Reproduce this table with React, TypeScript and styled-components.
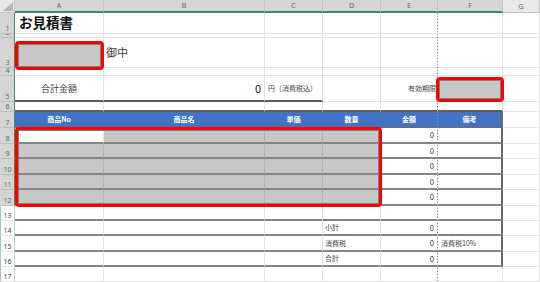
import React from 'react';
import styled, { createGlobalStyle } from 'styled-components';

const GlobalStyle = createGlobalStyle`
  html, body { margin: 0; padding: 0; background: #ffffff; }
  body {
    width: 540px; height: 282px; overflow: hidden;
    font-family: "Noto Sans CJK JP", "Noto Sans", "DejaVu Sans", sans-serif;
  }
  #root { width: 540px; height: 282px; }
`;

const ROW_HEIGHTS = [21, 4, 30, 8, 26, 10, 16, 16, 15, 16, 15, 16, 15, 15, 16, 15, 15];
const COL_LETTERS = ['A', 'B', 'C', 'D', 'E', 'F', 'G'];

const GRID = '1px solid #e3e3e3';
const TABLE_LINE = '2px solid #858585';
const GRAY = '#c7c7c7';
const BLUE = '#4472c4';

type Align = 'left' | 'right' | 'center';
const justify: Record<Align, string> = { left: 'flex-start', right: 'flex-end', center: 'center' };

const Sheet = styled.div`
  display: grid;
  grid-template-columns: 15px 89px 161px 58px 58px 57px 65px 37px;
  grid-template-rows: 13px ${ROW_HEIGHTS.map((h) => `${h}px`).join(' ')};
  width: 540px;
  height: 282px;
  overflow: hidden;
  background: #ffffff;
`;

const Corner = styled.div`
  grid-row: 1;
  grid-column: 1;
  box-sizing: border-box;
  background: #e6e6e6;
  border-right: 1px solid #c6c6c6;
  border-bottom: 1px solid #c6c6c6;
  display: flex;
  align-items: flex-end;
  justify-content: flex-end;
  padding: 0 1px 1px 0;
`;

const ColHead = styled.div<{ $c: number; $sel: boolean }>`
  grid-row: 1;
  grid-column: ${(p) => p.$c};
  box-sizing: border-box;
  background: ${(p) => (p.$sel ? '#d5d5d5' : '#e8e8e8')};
  border-right: 1px solid #c3c3c3;
  border-bottom: ${(p) => (p.$sel ? '2px solid #3f8c60' : '1px solid #c3c3c3')};
  display: flex;
  align-items: center;
  justify-content: center;
  font-family: "Noto Sans", "Liberation Sans", sans-serif;
  font-size: 7px;
  line-height: 1;
  color: ${(p) => (p.$sel ? '#4f6f5c' : '#666666')};
`;

const RowHead = styled.div<{ $r: number; $sel: boolean }>`
  grid-row: ${(p) => p.$r};
  grid-column: 1;
  box-sizing: border-box;
  overflow: hidden;
  background: ${(p) => (p.$sel ? '#d5d5d5' : '#ffffff')};
  border-right: ${(p) => (p.$sel ? '1px solid #3f8c60' : '1px solid #cfcfcf')};
  border-left: ${(p) => (p.$sel ? '1px solid #d5d5d5' : '1px solid #9fcbb2')};
  border-bottom: 1px solid ${(p) => (p.$sel ? '#bdbdbd' : '#e3e3e3')};
  display: flex;
  align-items: flex-end;
  justify-content: center;
  padding-bottom: 1px;
  font-family: "Noto Sans", "Liberation Sans", sans-serif;
  font-size: 7px;
  line-height: 1;
  color: ${(p) => (p.$sel ? '#3c7a57' : '#444444')};
`;

const Cell = styled.div<{
  $r: number;
  $c: number;
  $fill: string;
  $bb: string;
  $br: string;
  $align: Align;
  $pl: number;
  $pr: number;
}>`
  grid-row: ${(p) => p.$r};
  grid-column: ${(p) => p.$c};
  box-sizing: border-box;
  min-width: 0;
  min-height: 0;
  background: ${(p) => p.$fill};
  border-right: ${(p) => p.$br};
  border-bottom: ${(p) => p.$bb};
  display: flex;
  align-items: center;
  justify-content: ${(p) => justify[p.$align]};
  padding: 0 ${(p) => p.$pr}px 0 ${(p) => p.$pl}px;
  white-space: nowrap;
  line-height: 1;
  color: #333333;
`;

const Title = styled.span`
  font-size: 13.5px;
  font-weight: 700;
  color: #111111;
`;

const Honorific = styled.span`
  font-size: 11px;
  color: #3a3a3a;
`;

const TotalLabel = styled.span`
  font-size: 9px;
  color: #444444;
`;

const TotalValue = styled.span`
  font-size: 11px;
  color: #222222;
`;

const Note = styled.span`
  font-size: 7px;
  color: #444444;
`;

const Num = styled.span`
  font-size: 7.5px;
  color: #333333;
`;

const HeadText = styled.span`
  font-size: 7px;
  font-weight: 700;
  color: #ffffff;
`;

const PageBreak = styled.div`
  grid-row: 2 / 19;
  grid-column: 6;
  justify-self: end;
  width: 1px;
  background: repeating-linear-gradient(to bottom, #8c8c8c 0 1px, transparent 1px 3px);
  z-index: 2;
  pointer-events: none;
`;

const Highlight = styled.div<{ $area: string; $offset: string; $fill?: string }>`
  grid-area: ${(p) => p.$area};
  margin: ${(p) => p.$offset};
  box-sizing: border-box;
  border: 3px solid #ff0000;
  border-radius: 4px;
  background: ${(p) => p.$fill ?? 'transparent'};
  box-shadow: inset 0 0 0 1px #6f8585;
  z-index: 3;
  pointer-events: none;
`;

type Content = { node: React.ReactNode; align?: Align; pl?: number; pr?: number };

const HEADERS = ['商品No', '商品名', '単価', '数量', '金額', '備考'];

const CONTENT: Record<string, Content> = {
  A1: { node: <Title>お見積書</Title>, pl: 4 },
  B3: { node: <Honorific>御中</Honorific>, pl: 2 },
  A5: { node: <TotalLabel>合計金額</TotalLabel>, align: 'center' },
  B5: { node: <TotalValue>0</TotalValue>, align: 'right', pr: 3 },
  C5: { node: <Note>円（消費税込）</Note>, pl: 3 },
  E5: { node: <Note>有効期限</Note>, align: 'right', pr: 1 },
  D14: { node: <Note>小計</Note>, pl: 2 },
  D15: { node: <Note>消費税</Note>, pl: 2 },
  D16: { node: <Note>合計</Note>, pl: 2 },
  F15: { node: <Note>消費税10%</Note>, pl: 3 },
};
HEADERS.forEach((h, i) => {
  CONTENT[`${COL_LETTERS[i]}7`] = { node: <HeadText>{h}</HeadText>, align: 'center' };
});
[8, 9, 10, 11, 12, 14, 15, 16].forEach((r) => {
  CONTENT[`E${r}`] = { node: <Num>0</Num>, align: 'right', pr: 3 };
});

function cellStyle(r: number, c: number) {
  let fill = '#ffffff';
  let bb = GRID;
  let br = GRID;
  const inTable = r >= 7 && r <= 16 && c <= 6;
  if (r === 5 && c <= 3) bb = '2px solid #5a5a5a';
  if (r === 6 && c <= 6) bb = '2px solid #5e5e5e';
  if (inTable) {
    bb = TABLE_LINE;
    if (c === 6) br = '2px solid #6a6a6a';
  }
  if (r === 7 && c <= 6) {
    fill = BLUE;
    if (c < 6) br = `1px solid ${BLUE}`;
    bb = '2px solid #5b6f94';
  }
  const grayBlock = (r === 8 && c >= 2 && c <= 4) || (r >= 9 && r <= 12 && c <= 4);
  if (grayBlock) {
    fill = GRAY;
    br = '1px solid #b1b1b1';
  }
  return { fill, bb, br };
}

export default function App() {
  const rows = ROW_HEIGHTS.map((_, i) => i + 1);
  return (
    <>
      <GlobalStyle />
      <Sheet>
        <Corner>
          <svg width="10" height="9" viewBox="0 0 10 9">
            <polygon points="10,0 10,9 0,9" fill="#b5b5b5" />
          </svg>
        </Corner>
        {COL_LETTERS.map((l, i) => (
          <ColHead key={l} $c={i + 2} $sel={i < 6}>
            {l}
          </ColHead>
        ))}
        {rows.map((r) => (
          <RowHead key={`h${r}`} $r={r + 1} $sel={r <= 12}>
            {r}
          </RowHead>
        ))}
        {rows.map((r) =>
          COL_LETTERS.map((l, ci) => {
            const c = ci + 1;
            const s = cellStyle(r, c);
            const ct = CONTENT[`${l}${r}`];
            return (
              <Cell
                key={`${l}${r}`}
                $r={r + 1}
                $c={c + 1}
                $fill={s.fill}
                $bb={s.bb}
                $br={s.br}
                $align={ct?.align ?? 'left'}
                $pl={ct?.pl ?? 2}
                $pr={ct?.pr ?? 2}
              >
                {ct?.node}
              </Cell>
            );
          })
        )}
        <PageBreak />
        <Highlight $area="4 / 2 / 5 / 3" $offset="3px 0 -2px 0" $fill={GRAY} />
        <Highlight $area="6 / 7 / 7 / 8" $offset="1px -1px 0 -2px" $fill={GRAY} />
        <Highlight $area="9 / 2 / 14 / 6" $offset="-1px -1px -1px 0" />
      </Sheet>
    </>
  );
}
